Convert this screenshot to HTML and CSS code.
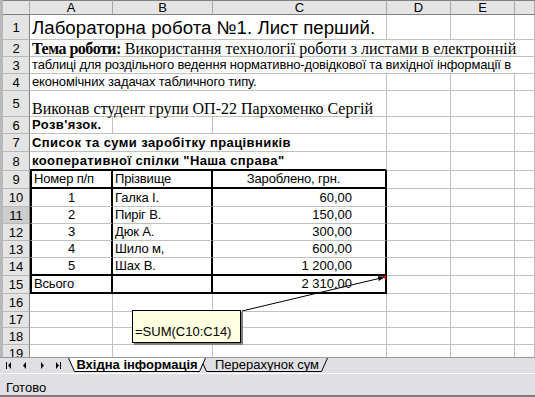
FILE: index.html
```html
<!DOCTYPE html>
<html lang="uk">
<head>
    <meta charset="UTF-8">
    <title>Лабораторна робота №1</title>
    <link rel="stylesheet" href="styles.css">
</head>
<body>
    <div id="window">
        <div id="sheet">
            <!-- column headers -->
            <div class="corner"></div>
            <div class="ch">A</div>
            <div class="ch">B</div>
            <div class="ch">C</div>
            <div class="ch">D</div>
            <div class="ch">E</div>
            <div class="ch"></div>

            <div class="rh">1</div>
            <div class="c title span3">Лабораторна робота №1. Лист перший.</div>
            <div class="c"></div><div class="c"></div><div class="c"></div>

            <div class="rh">2</div>
            <div class="c serif span6"><b>Тема роботи:</b>&nbsp;Використання технології роботи з листами в електронній</div>

            <div class="rh">3</div>
            <div class="c span6">таблиці для роздільного ведення нормативно-довідкової та вихідної інформації в</div>

            <div class="rh">4</div>
            <div class="c span3">економічних задачах табличного типу.</div>
            <div class="c"></div><div class="c"></div><div class="c"></div>

            <div class="rh">5</div>
            <div class="c serif span3">Виконав студент групи ОП-22 Пархоменко Сергій</div>
            <div class="c"></div><div class="c"></div><div class="c"></div>

            <div class="rh">6</div>
            <div class="c bold">Розв'язок.</div>
            <div class="c"></div><div class="c"></div><div class="c"></div><div class="c"></div><div class="c"></div>

            <div class="rh">7</div>
            <div class="c bold span3">Список та суми заробітку працівників</div>
            <div class="c"></div><div class="c"></div><div class="c"></div>

            <div class="rh">8</div>
            <div class="c bold span3 tb-bottom">кооперативної спілки "Наша справа"</div>
            <div class="c"></div><div class="c"></div><div class="c"></div>

            <div class="rh">9</div>
            <div class="c tb-left tb-right tb-bottom">Номер п/п</div>
            <div class="c tb-right tb-bottom">Прізвище</div>
            <div class="c tb-right tb-bottom head-c">Заробленo, грн.</div>
            <div class="c"></div><div class="c"></div><div class="c"></div>

            <div class="rh">10</div>
            <div class="c tb-left tb-right center">1</div>
            <div class="c tb-right">Галка І.</div>
            <div class="c tb-right num">60,00</div>
            <div class="c"></div><div class="c"></div><div class="c"></div>

            <div class="rh hover">11</div>
            <div class="c tb-left tb-right center">2</div>
            <div class="c tb-right">Пиріг В.</div>
            <div class="c tb-right num">150,00</div>
            <div class="c"></div><div class="c"></div><div class="c"></div>

            <div class="rh">12</div>
            <div class="c tb-left tb-right center">3</div>
            <div class="c tb-right">Дюк А.</div>
            <div class="c tb-right num">300,00</div>
            <div class="c"></div><div class="c"></div><div class="c"></div>

            <div class="rh">13</div>
            <div class="c tb-left tb-right center">4</div>
            <div class="c tb-right">Шило м,</div>
            <div class="c tb-right num">600,00</div>
            <div class="c"></div><div class="c"></div><div class="c"></div>

            <div class="rh">14</div>
            <div class="c tb-left tb-right tb-bottom center">5</div>
            <div class="c tb-right tb-bottom">Шах В.</div>
            <div class="c tb-right tb-bottom num">1 200,00</div>
            <div class="c"></div><div class="c"></div><div class="c"></div>

            <div class="rh">15</div>
            <div class="c tb-left tb-right tb-bottom">Всього</div>
            <div class="c tb-right tb-bottom"></div>
            <div class="c tb-right tb-bottom num">2 310,00</div>
            <div class="c"></div><div class="c"></div><div class="c"></div>

            <div class="rh">16</div>
            <div class="c"></div><div class="c"></div><div class="c"></div><div class="c"></div><div class="c"></div><div class="c"></div>

            <div class="rh">17</div>
            <div class="c"></div><div class="c"></div><div class="c"></div><div class="c"></div><div class="c"></div><div class="c"></div>

            <div class="rh">18</div>
            <div class="c"></div><div class="c"></div><div class="c"></div><div class="c"></div><div class="c"></div><div class="c"></div>

            <div class="rh">19</div>
            <div class="c"></div><div class="c"></div><div class="c"></div><div class="c"></div><div class="c"></div><div class="c"></div>
        </div>

        <div id="tabbar">
            <div class="nav">
                <svg width="62" height="14" viewBox="0 0 62 14">
                    <rect x="5" y="4" width="1" height="7" fill="#000"/>
                    <polygon points="10,4 10,11 7,7.5" fill="#000"/>
                    <polygon points="25,4 25,11 22,7.5" fill="#000"/>
                    <polygon points="40,4 40,11 43,7.5" fill="#000"/>
                    <polygon points="55,4 55,11 58,7.5" fill="#000"/>
                    <rect x="59" y="4" width="1" height="7" fill="#000"/>
                </svg>
            </div>
            <div class="tab active">
                <svg class="tab-shape" width="138" height="14" viewBox="0 0 138 14">
                    <polygon points="0.5,0 137.5,0 131.5,13.5 6.5,13.5" fill="#fff"/>
                    <polyline points="0.5,0 6.5,13.5 131.5,13.5 137.5,0" fill="none" stroke="#000"/>
                </svg>
                <span>Вхідна інформація</span>
            </div>
            <div class="tab">
                <svg class="tab-shape" width="128" height="14" viewBox="0 0 128 14">
                    <polygon points="0.5,0 127.5,0 121.5,13.5 6.5,13.5" fill="#e0dfe3"/>
                    <polyline points="0.5,0 6.5,13.5 121.5,13.5 127.5,0" fill="none" stroke="#000"/>
                </svg>
                <span>Перерахунок сум</span>
            </div>
        </div>

        <div id="status">Готово</div>

        <svg class="callout" width="535" height="397" viewBox="0 0 535 397">
            <line x1="242" y1="311" x2="381" y2="278" stroke="#000" stroke-width="1"/>
            <polygon points="385,277 378.8,281 377.8,276" fill="#000"/>
            <polygon points="382,276 386,276 386,280" fill="#e00000"/>
        </svg>
        <div class="comment">=SUM(C10:C14)</div>
    </div>
</body>
</html>
```

FILE: styles.css
```css
* {
    margin: 0;
    padding: 0;
    box-sizing: border-box;
}

body {
    font-family: "Liberation Sans", Arial, sans-serif;
    font-size: 13px;
    color: #000;
    background: #fff;
    overflow: hidden;
}

#window {
    position: relative;
    width: 535px;
    height: 397px;
    display: flex;
    flex-direction: column;
    background: #e0dfe3;
}

#sheet {
    height: 357px;
    flex: none;
    overflow: hidden;
    background: #fff;
    border-left: 3px solid #b8b8bc;
    display: grid;
    grid-template-columns: 27px 83px 100px 174px 64px 64px 1fr;
    grid-template-rows: 15px 25px 17px 17px 17px 26px 17px 18px 19px 18px 18px 17px 17px 17px 18px 18px 18px 16px 17px 17px;
}

.corner,
.ch,
.rh {
    background: #e4e4e4;
    color: #000;
    font-size: 13px;
    display: flex;
    align-items: center;
    justify-content: center;
    border-right: 1px solid #a8a8a8;
    border-bottom: 1px solid #b8b8b8;
}

.corner,
.ch {
    border-top: 1px solid #808080;
    border-bottom-color: #808080;
    line-height: 1;
}

.rh {
    border-right-color: #808080;
}

.rh.hover {
    background: #cdcdcd;
}

.c {
    border-right: 1px solid #c0c0c0;
    border-bottom: 1px solid #c0c0c0;
    display: flex;
    align-items: flex-end;
    padding: 0 2px 1px 2px;
    white-space: nowrap;
    overflow: visible;
    line-height: 15px;
    letter-spacing: -0.15px;
}

.span3 { grid-column: span 3; }
.span6 { grid-column: span 6; }

.title {
    font-size: 18.7px;
    line-height: 22px;
    padding-bottom: 0;
    letter-spacing: 0;
}

.serif {
    font-family: "Liberation Serif", "Times New Roman", serif;
    font-size: 16px;
    line-height: 13px;
    padding-bottom: 1px;
    letter-spacing: 0;
}

.serif b {
    letter-spacing: -0.5px;
}

.bold {
    font-weight: bold;
    letter-spacing: 0.4px;
}

.center { justify-content: center; }

.num {
    justify-content: flex-end;
    padding-right: 33px;
    letter-spacing: 0;
}

.head-c {
    justify-content: center;
    padding-right: 13px;
}

.tb-left { border-left: 2px solid #000; }
.tb-right { border-right: 2px solid #000; }
.tb-bottom { border-bottom: 2px solid #000; }

#tabbar {
    height: 16px;
    flex: none;
    display: flex;
    align-items: flex-start;
    background: #e0dfe3;
    border-top: 1px solid #9a9a9a;
}

.nav {
    width: 68px;
    padding: 0 0 0 1px;
    flex: none;
}

.nav svg {
    display: block;
}

.tab {
    position: relative;
    height: 14px;
    display: flex;
    align-items: center;
    justify-content: center;
    font-size: 13px;
    line-height: 14px;
}

.tab.active {
    width: 138px;
    z-index: 2;
    font-weight: bold;
}

.tab:not(.active) {
    width: 128px;
    margin-left: -6px;
    padding-left: 6px;
}

.tab-shape {
    position: absolute;
    top: 0;
    left: 0;
}

.tab span {
    position: relative;
}

#status {
    flex: 1;
    border-top: 1px solid #fff;
    border-bottom: 2px solid #7a7a80;
    padding: 6px 0 0 6px;
    font-size: 13px;
    line-height: 15px;
}

.callout {
    position: absolute;
    top: 0;
    left: 0;
    z-index: 3;
    pointer-events: none;
}

.comment {
    position: absolute;
    left: 132px;
    top: 310px;
    width: 109px;
    height: 33px;
    background: #ffffe1;
    border: 1px solid #000;
    box-shadow: 2px 2px 0 #808080;
    font-size: 13px;
    line-height: 15px;
    padding: 0 0 3px 2px;
    display: flex;
    align-items: flex-end;
    z-index: 4;
}
```
